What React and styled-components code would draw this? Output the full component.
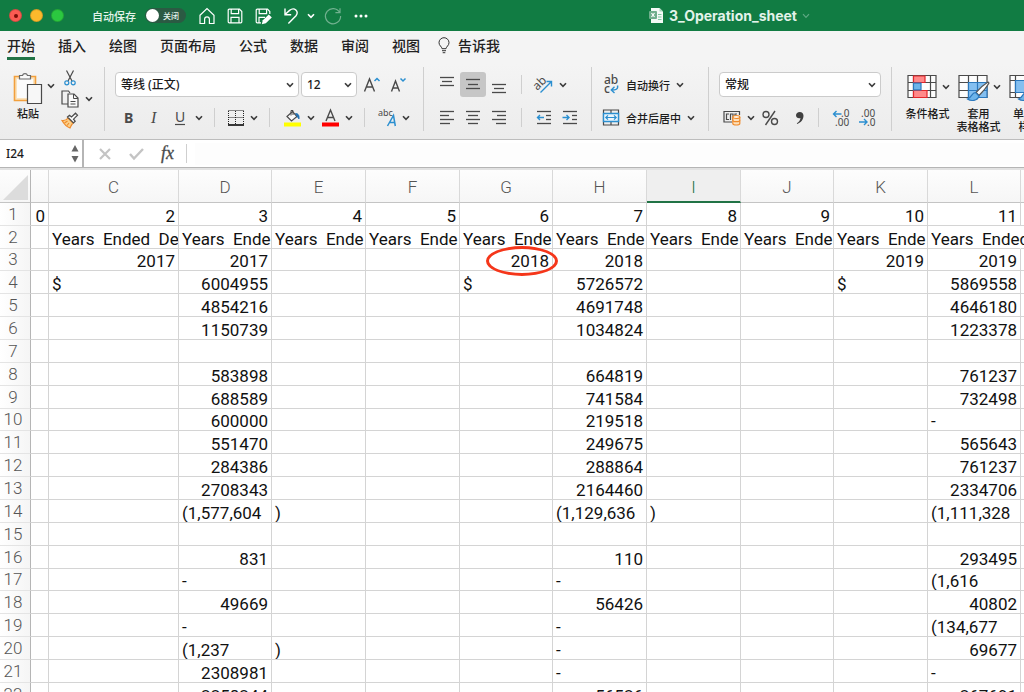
import { useState } from "react";
import styled, { createGlobalStyle } from "styled-components";

const GlobalStyle = createGlobalStyle`
  * {
    box-sizing: border-box;
  }
  body {
    margin: 0;
    overflow: hidden;
    background: #ffffff;
    font-family: "Noto Sans CJK SC", sans-serif;
    color: #1c1c1c;
  }
  button, input, select {
    font: inherit;
    color: inherit;
    margin: 0;
  }
  svg {
    flex: none;
    overflow: visible;
  }
`;

const Window = styled.div`
  display: flex;
  flex-direction: column;
  height: 100vh;
  overflow: hidden;
`;

const TitleBar = styled.header`
  display: flex;
  align-items: center;
  flex: none;
  height: 31px;
  padding-left: 9px;
  background: #117c43;
  color: #e3f3ea;
`;

const Lights = styled.div`
  display: flex;
  gap: 8px;
  margin-right: 28px;
`;

const Light = styled.button`
  display: grid;
  place-items: center;
  width: 13px;
  height: 13px;
  padding: 0;
  border: 1px solid rgba(0, 0, 0, 0.16);
  border-radius: 50%;
  background: ${({ $color }) => $color};
  &::after {
    content: "";
    width: 4px;
    height: 4px;
    border-radius: 50%;
    background: ${({ $edited }) => ($edited ? "#7a0d08" : "transparent")};
  }
`;

const AutoSave = styled.label`
  display: flex;
  align-items: center;
  gap: 9px;
  margin-right: 7px;
  font-size: 11px;
  font-weight: 500;
  line-height: 16px;
`;

const SwitchTrack = styled.span`
  display: flex;
  align-items: center;
  width: 41px;
  height: 15px;
  padding: 0 1px;
  border-radius: 8px;
  background: #2b5a43;
  font-size: 8px;
  gap: 4px;
`;

const SwitchInput = styled.input`
  appearance: none;
  width: 13px;
  height: 13px;
  border-radius: 50%;
  background: #ffffff;
`;

const QuickButton = styled.button`
  display: grid;
  place-items: center;
  width: ${({ $w }) => $w || 28}px;
  height: 24px;
  padding: 0;
  border: 0;
  background: none;
  color: #ffffff;
  opacity: ${({ $dim }) => ($dim ? 0.4 : 1)};
`;

const DocTitle = styled.h1`
  display: flex;
  align-items: center;
  gap: 5px;
  margin: 0 214px 0 auto;
  font-family: Inter, sans-serif;
  font-size: 14px;
  font-weight: 700;
  line-height: 16px;
`;

const Tabs = styled.nav`
  display: flex;
  flex: none;
  align-items: flex-start;
  gap: 18px;
  height: 33px;
  padding: 2px 7px 0;
  background: #f4f4f4;
`;

const TabList = styled.div`
  display: flex;
  gap: 23px;
`;

const Tab = styled.a`
  display: flex;
  align-items: center;
  gap: 8px;
  height: 27px;
  border-bottom: 3px solid ${({ $active }) => ($active ? "#217346" : "transparent")};
  color: #222222;
  font-size: 14px;
  font-weight: 500;
  line-height: 22px;
  text-decoration: none;
  white-space: nowrap;
`;

const Ribbon = styled.div`
  display: flex;
  flex: none;
  padding: 3px 0 8px;
  border-bottom: 1px solid #bdbdbd;
  background: linear-gradient(#f4f4f4, #ececec);
`;

const Group = styled.section`
  display: flex;
  flex: none;
  flex-direction: ${({ $row }) => ($row ? "row" : "column")};
  gap: ${({ $row }) => ($row ? 0 : 8)}px;
  width: ${({ $w }) => $w}px;
  height: 64px;
  padding: ${({ $row }) => ($row ? 0 : 5)}px 0 0 10px;
  border-left: 1px solid ${({ $first }) => ($first ? "transparent" : "#cfcfcf")};
`;

const Line = styled.div`
  display: flex;
  align-items: center;
  height: ${({ $h }) => $h || 25}px;
`;

const Tool = styled.button`
  display: grid;
  flex: none;
  place-items: center;
  width: ${({ $w }) => $w || 26}px;
  height: ${({ $h }) => $h || 25}px;
  padding: 0;
  border: 0;
  border-radius: 3px;
  background: ${({ $active }) => ($active ? "#c6c6c6" : "none")};
`;

const CaretButton = styled(Tool)`
  width: 12px;
`;

const Separator = styled.span`
  width: 1px;
  height: 19px;
  margin: ${({ $tight }) => ($tight ? "0 8px 0 0" : "0 9px")};
  background: #cfcfcf;
`;

const SelectBox = styled.span`
  display: grid;
  align-items: center;
  width: ${({ $w }) => $w}px;
  height: 25px;
  margin-right: 2px;
  border: 1px solid #cbcbcb;
  border-radius: 4px;
  background: #ffffff;
  & > * {
    grid-area: 1 / 1;
  }
  & > svg {
    justify-self: end;
    margin-right: 4px;
    pointer-events: none;
  }
`;

const Select = styled.select`
  appearance: none;
  width: 100%;
  height: 22px;
  padding: 0 5px;
  border: 0;
  background: none;
  font-family: "Noto Sans", "Noto Sans CJK SC", sans-serif;
  font-size: 12px;
  font-weight: 500;
  line-height: 18px;
`;

const TextTool = styled.button`
  display: flex;
  align-items: center;
  gap: 6px;
  height: 25px;
  padding: 0;
  border: 0;
  background: none;
  font-size: 11px;
  font-weight: 500;
  line-height: 16px;
  white-space: nowrap;
`;

const ToolStack = styled.div`
  display: flex;
  flex-direction: column;
`;

const Paste = styled.button`
  display: flex;
  flex-direction: column;
  align-items: center;
  width: 34px;
  height: 60px;
  padding: 5px 0 0;
  border: 0;
  background: none;
  font-size: 11px;
  font-weight: 500;
  line-height: 16px;
`;

const StyleTool = styled.button`
  display: flex;
  flex: none;
  flex-direction: column;
  align-items: center;
  width: 51px;
  padding: 5px 0 0;
  border: 0;
  background: none;
  font-size: 11px;
  font-weight: 500;
  line-height: 13px;
  white-space: pre;
`;

const StyleIcon = styled.span`
  display: flex;
  align-self: flex-end;
  align-items: center;
  gap: 5px;
  height: 35px;
  padding: 0 3px 5px 0;
`;

const FormulaBar = styled.div`
  display: flex;
  flex: none;
  align-items: center;
  height: 28px;
  border-bottom: 1px solid #b5b5b5;
  background: #ffffff;
`;

const NameBox = styled.div`
  display: flex;
  align-items: center;
  width: 84px;
  height: 27px;
  padding: 0 3px 0 6px;
  border-right: 2px solid #b5b5b5;
`;

const NameInput = styled.input`
  flex: 1;
  min-width: 0;
  padding: 0;
  border: 0;
  outline: 0;
  background: none;
  font-family: "Noto Sans", "Noto Sans CJK SC", sans-serif;
  font-size: 12px;
  font-weight: 500;
  line-height: 18px;
`;

const Stepper = styled.div`
  display: flex;
  flex-direction: column;
  gap: 3px;
`;

const FormulaInput = styled.input`
  flex: 1;
  min-width: 0;
  height: 22px;
  border: 0;
  outline: 0;
  background: #fdfdfd;
`;

const SheetArea = styled.main`
  flex: 1;
  min-height: 0;
  padding-top: 2px;
  overflow: hidden;
  background: #e2e2e2;
`;

const Sheet = styled.table`
  width: 1114px;
  table-layout: fixed;
  border-collapse: separate;
  border-spacing: 0;
  background: #ffffff;
  font-family: Roboto, "Noto Sans CJK SC", sans-serif;
  font-size: 17px;
`;

const Col = styled.col`
  width: ${({ $w }) => $w}px;
`;

const ColumnHead = styled.th`
  height: 33px;
  padding: 2px 0 0;
  border-right: 1px solid #d9d9d9;
  border-bottom: ${({ $active }) => ($active ? "2px solid #217346" : "1px solid #c4c4c4")};
  background: ${({ $active }) => ($active ? "#efefef" : "linear-gradient(#fdfdfd, #f6f6f6)")};
  color: ${({ $active }) => ($active ? "#217346" : "#555555")};
  font-weight: 300;
  line-height: 24px;
`;

const Corner = styled(ColumnHead)`
  border-right-color: #b5b5b5;
  & > svg {
    display: block;
    margin-left: 3px;
  }
`;

const Row = styled.tr`
  height: 23px;
  &:nth-child(7n + 3) {
    height: 22px;
  }
`;

const RowHead = styled.th`
  padding: 0 4px 0 0;
  border-right: 1px solid #b5b5b5;
  border-bottom: 1px solid #e4e4e4;
  background: linear-gradient(90deg, #ffffff, #f5f5f5);
  color: #555555;
  font-weight: 300;
  line-height: 21px;
`;

const Cell = styled.td`
  position: relative;
  padding: 3px 3px 0;
  border-right: 1px solid ${({ $spill }) => ($spill ? "transparent" : "#d4d4d4")};
  border-bottom: 1px solid #d4d4d4;
  color: #111111;
  line-height: 18px;
  text-align: ${({ $align }) => $align};
  white-space: pre;
  overflow: ${({ $open }) => ($open ? "visible" : "hidden")};
`;

/* hand-drawn ring laid over a cell */
const Ring = styled.span`
  position: absolute;
  top: -3px;
  right: -6px;
  width: 72px;
  height: 30px;
  border: 3px solid #f5361a;
  border-radius: 50%;
`;

const ink = "#4a4a4a";
const blue = "#2b8fd0";

const Svg = ({ w, h, children, ...rest }) => (
  <svg width={w} height={h} viewBox={`0 0 ${w} ${h}`} fill="none" stroke={ink} strokeWidth="1.2" aria-hidden="true" {...rest}>
    {children}
  </svg>
);

const Caret = (props) => (
  <Svg w={8} h={6} strokeWidth="1.6" stroke="#3c3c3c" {...props}>
    <path d="M1 1.2 4 4.4 7 1.2" />
  </Svg>
);

const Drop = ({ label, $h }) => (
  <CaretButton aria-label={label} $h={$h}>
    <Caret />
  </CaretButton>
);

const HomeIcon = () => (
  <Svg w={18} h={18} stroke="currentColor">
    <path d="M2 8.2 9 1.5l7 6.7v8.3h-4.6v-4.2a2.4 2.4 0 0 0-4.8 0v4.2H2z" />
  </Svg>
);

const SaveIcon = () => (
  <Svg w={16} h={16} stroke="currentColor">
    <path d="M1.2 2.2a1 1 0 0 1 1-1h10.3l2.3 2.3v10.3a1 1 0 0 1-1 1H2.2a1 1 0 0 1-1-1zM4.2 1.4v4.3h7.4V1.4M4 14.8V9.4h8v5.4" />
  </Svg>
);

const SaveAsIcon = () => (
  <Svg w={17} h={16} stroke="currentColor">
    <path d="M6 14.8H2.2a1 1 0 0 1-1-1V2.2a1 1 0 0 1 1-1h10.3l2.3 2.3V6M4.2 1.4v4.3h7.4V1.4M4 14.8V9.4h6" />
    <path d="M6.8 16.2l1-4 6-5.800 3 3-6 5.800z" fill="currentColor" stroke="none" />
  </Svg>
);

const UndoIcon = () => (
  <Svg w={16} h={18} stroke="currentColor" strokeWidth="1.4">
    <path d="M2 1.5v6.2h6.2M2.3 7.3 6.6 3.4c5-4 9.5 1.4 6.4 5.4L5.4 16.5" />
  </Svg>
);

const RedoIcon = () => (
  <Svg w={18} h={18} stroke="currentColor">
    <path d="M15.6 5.4A7.6 7.6 0 1 0 16.6 9M11.4 5.6h4.6V1.2" />
  </Svg>
);

const DotsIcon = () => (
  <Svg w={14} h={4} stroke="none">
    <g fill="currentColor">
      <circle cx="2" cy="2" r="1.5" />
      <circle cx="7" cy="2" r="1.5" />
      <circle cx="12" cy="2" r="1.5" />
    </g>
  </Svg>
);

const DocIcon = () => (
  <Svg w={15} h={16} stroke="none">
    <path d="M2 0h8.5L14 3.5V15H2z" fill="#f3faf6" />
    <path d="M10.5 0v3.5H14z" fill="#a6d5bb" />
    <path d="M9 6.5h3.5M9 9h3.5M9 11.5h3.5" stroke="#7cc6a0" />
    <rect y="3" width="8" height="8" rx="1" fill="#6fae8c" />
    <path d="M2.5 5l3 4M5.5 5l-3 4" stroke="#ffffff" />
  </Svg>
);

const BulbIcon = () => (
  <Svg w={12} h={17} stroke="#333333" strokeWidth="1">
    <path d="M4 11.7C3.8 9.5 1 8.700 1 5.700a5 5 0 0 1 10 0c0 3-2.800 3.800-3 6zM4 13.700h4M4.700 15.700h2.600" />
  </Svg>
);

const PasteIcon = () => (
  <Svg w={30} h={33}>
    <path d="M1.500 4.500h21v24h-21z" fill="#fbe3bd" stroke="#f2a03d" strokeWidth="1.600" />
    <path d="M4 7h16v19H4z" fill="#fbfbfb" stroke="none" />
    <path d="M6.500 7V3.500h3a2.600 2.600 0 0 1 5 0h3V7z" fill="#fafafa" stroke="#6a6a6a" />
    <path d="M14.500 12.500h14v19h-14z" fill="#f7f7f7" />
  </Svg>
);

const ScissorsIcon = () => (
  <Svg w={12} h={16}>
    <path d="M2.500.500 8 11M9.500.500 4 11" />
    <circle cx="2.800" cy="12.800" r="2" stroke={blue} />
    <circle cx="9.200" cy="12.800" r="2" stroke={blue} />
  </Svg>
);

const CopyIcon = () => (
  <Svg w={18} h={18}>
    <path d="M7 14H1V1h6.500l1.500 2" />
    <path d="M7 4h6l4 4v9H7z" fill="#fafafa" />
    <path d="M12.500 4v4.500H17M9.500 11.500h5M9.500 14h5" strokeWidth="1" />
  </Svg>
);

const BrushIcon = () => (
  <Svg w={18} h={17}>
    <path d="M1 8.500c3 .5 4.500-.5 6-2.500l5 5c-1.500 1.500-2 3-3 5C5 14.500 3 12 1 8.500z" fill="#fbd08a" stroke="#ef8b2c" />
    <path d="M3.500 11 6.500 9M6 13.500l2-2.500" stroke="#ef8b2c" />
    <path d="m6.500 5 2-1.800 2 1.800 4-3.800 2 2-4 4 1.700 2-1.700 1.800z" fill="#fafafa" />
  </Svg>
);

const Letter = ({ children, size = 14, x = 1, y = 13, ...rest }) => (
  <text x={x} y={y} fontSize={size} stroke="none" fill={ink} fontFamily="Noto Sans, sans-serif" {...rest}>
    {children}
  </text>
);

const GrowIcon = () => (
  <Svg w={18} h={18}>
    <path d="M1.500 15.500 6.500 3l5 12.500M3.300 11h6.400" strokeWidth="1.400" />
    <path d="m11.500 5 2.500-2.500L16.500 5" stroke={blue} strokeWidth="1.500" />
  </Svg>
);

const ShrinkIcon = () => (
  <Svg w={18} h={18}>
    <path d="M2.500 15.500 6.500 5l4 10.500M4 12h5" strokeWidth="1.400" />
    <path d="M11.500 2.500 14 5l2.500-2.500" stroke={blue} strokeWidth="1.500" />
  </Svg>
);

const BorderIcon = () => (
  <Svg w={16} h={16}>
    <path d="M.500.500h15M.500 7.500h15M.500 1v13M7.500 1v13M15.500 1v13" strokeDasharray="1 1" strokeWidth="1" stroke="#222222" />
    <path d="M0 15h16" strokeWidth="1.800" stroke="#222222" />
  </Svg>
);

const FillIcon = () => (
  <Svg w={17} h={18}>
    <path d="M3 7.500 8.500 2.500l4.500 5L7.500 12z" fill="#fafafa" />
    <path d="M7 6.500V1.500h2v4.500" strokeWidth="1" />
    <path d="M11.500 4.500c3 0 4 2 3.500 5.500l-1.500-2z" fill="#1f6fb0" stroke="#1f6fb0" strokeWidth="0.800" />
    <path d="M0 15.500h17" stroke="#ffff00" strokeWidth="4" />
  </Svg>
);

const FontColorIcon = () => (
  <Svg w={17} h={18}>
    <path d="M4 12 8.500 1 13 12M5.500 8.500h6" strokeWidth="1.400" />
    <path d="M0 15.500h17" stroke="#ff0000" strokeWidth="4" />
  </Svg>
);

const PhoneticIcon = () => (
  <Svg w={20} h={18}>
    <Letter size={9} x={1} y={7}>abc</Letter>
    <path d="M10.500 17 16.500 6.500 18.300 17M13 13.500h4.800" stroke={blue} strokeWidth="1.500" />
  </Svg>
);

/* each entry is [x1, x2, y] */
const Bars = ({ lines, children }) => (
  <Svg w={16} h={16}>
    {lines.map(([a, b, y]) => (
      <path key={y} d={`M${a} ${y}H${b}`} strokeWidth="1.300" />
    ))}
    {children}
  </Svg>
);

const topBars = [[1, 15, 0.5], [3, 13, 4.5], [1, 15, 8.5]];
const middleBars = [[1, 15, 2.5], [3, 13, 7.5], [1, 15, 11.5]];
const bottomBars = [[1, 15, 7.5], [3, 13, 11.5], [1, 15, 15.5]];
const leftBars = [[1, 15, 1.5], [1, 10, 5.5], [1, 15, 9.5], [1, 11, 13.5]];
const centerBars = [[1, 15, 1.5], [3, 13, 5.5], [1, 15, 9.5], [3, 13, 13.5]];
const rightBars = [[1, 15, 1.5], [6, 15, 5.5], [1, 15, 9.5], [5, 15, 13.5]];
const indentBars = [[1, 15, 1.5], [10, 15, 5.5], [10, 15, 9.5], [1, 15, 13.5]];

const OrientIcon = () => (
  <Svg w={20} h={18}>
    <Letter size={12} x={-1} y={11} transform="rotate(-45 6 8)">ab</Letter>
    <path d="M6.500 16.500 17 6M12.500 5.500H17.500v5" stroke={blue} strokeWidth="1.400" />
  </Svg>
);

const WrapIcon = () => (
  <Svg w={18} h={18}>
    <Letter size={12} x={2} y={8}>ab</Letter>
    <Letter size={12} x={2} y={17}>c</Letter>
    <path d="M15.500 9.500c1 4-2 4.500-6 4.500M12.500 10.800 9.300 14l3.200 3" stroke={blue} strokeWidth="1.400" />
  </Svg>
);

const MergeIcon = () => (
  <Svg w={18} h={17}>
    <path d="M1.500 1h15v15h-15zM9 1v4M9 12v4" />
    <path d="M1.500 4.500h15v8h-15z" fill="#eaf5fc" stroke={blue} strokeWidth="1.400" />
    <path d="M4 8.500h10M6 6.300 3.800 8.500 6 10.700M12 6.300l2.200 2.200-2.200 2.200" stroke={blue} />
  </Svg>
);

const CurrencyIcon = () => (
  <Svg w={18} h={16}>
    <path d="M9 12H1V1.500h15.500V5" />
    <path d="M6 4H3.500v5.500H6M7.500 10V4h2.500v6M12 6V4h2" />
    <path d="M9.800 7v6.500c0 2 7 2 7 0V7" fill="#fde0bb" stroke="#ef8b2c" />
    <ellipse cx="13.300" cy="7" rx="3.500" ry="1.500" fill="#fff2e0" stroke="#ef8b2c" />
    <path d="M9.800 10.200c0 2 7 2 7 0" stroke="#ef8b2c" />
  </Svg>
);

const PercentIcon = () => (
  <Svg w={16} h={16} strokeWidth="1.400">
    <circle cx="4" cy="4.500" r="3" />
    <circle cx="12.500" cy="11.500" r="3" />
    <path d="M13 1 3.500 15" />
  </Svg>
);

const CommaIcon = () => (
  <Svg w={16} h={16} stroke="none">
    <path d="M11.800 2C9.600 2 8 3.300 8 5.300c0 1.900 1.400 3 3.300 3 .5 0 .9 0 1.200-.3-.2 2.200-1.500 3.900-3.700 5.300l.5.700c3.800-1.700 6.200-4.600 6.200-8.300C15.500 3.400 14 2 11.800 2z" fill="#404040" />
  </Svg>
);

const MoreDecimals = () => (
  <Svg w={18} h={18}>
    <Letter size={10} x={9} y={8}>.0</Letter>
    <Letter size={10} x={3} y={17}>.00</Letter>
    <path d="M9.500 5h-8M4.500 2 1.500 5l3 3" stroke={blue} strokeWidth="1.400" />
  </Svg>
);

const LessDecimals = () => (
  <Svg w={18} h={18}>
    <Letter size={10} x={3} y={8}>.00</Letter>
    <Letter size={10} x={9} y={17}>.0</Letter>
    <path d="M1 13h8M6 10l3 3-3 3" stroke={blue} strokeWidth="1.400" />
  </Svg>
);

const ConditionalIcon = () => (
  <Svg w={30} h={30}>
    <path d="M1 3.500h28v22H1z" fill="#fdfdfd" />
    <path d="M1 10.500h28M1 18.500h28M6.500 3.500v22M23.500 3.500v22" />
    <path d="M6.500 4h11.500v6.500H6.500zM6.500 18.500h13.500v7H6.500z" fill="#ff8a8a" stroke="#e3262b" />
    <path d="M6.500 11.200h7.500v6.600H6.500z" fill="#6db4ea" stroke="#2b78bd" />
  </Svg>
);

const Brush = () => (
  <>
    <path d="M30 10c-4 2.500-9 7-12 10.500l3 3C24.500 20 29 14.500 31 11z" fill="#ffffff" stroke="#555555" />
    <path d="M17.500 20.500c-4 0-3.500 5-8 6.500 3.500 2.500 10 2 11.500-3z" fill="#6db4ea" stroke="#2b78bd" />
  </>
);

const TableFormatIcon = () => (
  <Svg w={30} h={30}>
    <path d="M1 3.500h28v22H1z" fill="#fdfdfd" />
    <path d="M1 10.500h28M1 18.500h28M10.500 3.500v22M19.500 3.500v22" />
    <path d="M10.500 10.500h18.500v15H10.500z" fill="#84bff0" stroke="#2b78bd" />
    <path d="M10.500 18.500H29M19.500 10.500v15" stroke="#2b78bd" />
    <Brush />
  </Svg>
);

const CellStyleIcon = () => (
  <Svg w={30} h={30}>
    <path d="M1 3.500h28v22H1z" fill="#fdfdfd" />
    <path d="M1 8.500h28M1 20.500h28M6.500 3.500v22M24 3.500v22" />
    <path d="M6.500 8.500H24v12H6.500z" fill="#84bff0" stroke="#2b78bd" />
    <Brush />
  </Svg>
);

const tabs = ["插入", "绘图", "页面布局", "公式", "数据", "审阅", "视图"];

const columns = [
  { id: "B", label: "", w: 18 },
  { id: "C", w: 130 },
  { id: "D", w: 93 },
  { id: "E", w: 94 },
  { id: "F", w: 94 },
  { id: "G", w: 93 },
  { id: "H", w: 94 },
  { id: "I", w: 94 },
  { id: "J", w: 93 },
  { id: "K", w: 94 },
  { id: "L", w: 93 },
  { id: "M", w: 93 },
];

const heading = "Years  Ende";

const rows = [
  { B: "0", C: "2", D: "3", E: "4", F: "5", G: "6", H: "7", I: "8", J: "9", K: "10", L: "11" },
  {
    C: "Years  Ended  De", D: heading, E: heading, F: heading, G: heading,
    H: heading, I: heading, J: heading, K: heading, L: "Years  Ended",
  },
  { C: "2017", D: "2017", G: "2018", H: "2018", K: "2019", L: "2019" },
  { C: "$", D: "6004955", G: "$", H: "5726572", K: "$", L: "5869558" },
  { D: "4854216", H: "4691748", L: "4646180" },
  { D: "1150739", H: "1034824", L: "1223378" },
  {},
  { D: "583898", H: "664819", L: "761237" },
  { D: "688589", H: "741584", L: "732498" },
  { D: "600000", H: "219518", L: "-" },
  { D: "551470", H: "249675", L: "565643" },
  { D: "284386", H: "288864", L: "761237" },
  { D: "2708343", H: "2164460", L: "2334706" },
  { D: "(1,577,604", E: ")", H: "(1,129,636", I: ")", L: "(1,111,328" },
  {},
  { D: "831", H: "110", L: "293495" },
  { D: "-", H: "-", L: "(1,616" },
  { D: "49669", H: "56426", L: "40802" },
  { D: "-", H: "-", L: "(134,677" },
  { D: "(1,237", E: ")", H: "-", L: "69677" },
  { D: "2308981", H: "-", L: "-" },
  { D: "2258244", H: "56526", L: "267691" },
];

const SheetCell = ({ id, row, value = "" }) => {
  const circled = id === "G" && row === 3;
  const spill = id === "L" && row === 2;
  return (
    <Cell $align={/^\d+$/.test(value) ? "right" : "left"} $open={circled || spill} $spill={spill}>
      {value}
      {circled && <Ring />}
    </Cell>
  );
};

const App = () => {
  const [autoSave, setAutoSave] = useState(false);
  const [name, setName] = useState("I24");

  return (
    <Window>
      <GlobalStyle />
      <TitleBar>
        <Lights>
          <Light $color="#fb5b52" $edited aria-label="关闭窗口" />
          <Light $color="#fdb92c" aria-label="最小化" />
          <Light $color="#2bc840" aria-label="缩放" />
        </Lights>
        <AutoSave>
          自动保存
          <SwitchTrack>
            <SwitchInput type="checkbox" checked={autoSave} onChange={() => setAutoSave(!autoSave)} />
            关闭
          </SwitchTrack>
        </AutoSave>
        <QuickButton aria-label="主页"><HomeIcon /></QuickButton>
        <QuickButton aria-label="保存"><SaveIcon /></QuickButton>
        <QuickButton aria-label="另存为"><SaveAsIcon /></QuickButton>
        <QuickButton aria-label="撤消"><UndoIcon /></QuickButton>
        <QuickButton $w={12} aria-label="撤消列表"><Caret stroke="#ffffff" /></QuickButton>
        <QuickButton $w={32} $dim aria-label="重做"><RedoIcon /></QuickButton>
        <QuickButton $w={24} aria-label="更多"><DotsIcon /></QuickButton>
        <DocTitle>
          <DocIcon />
          3_Operation_sheet
          <Caret stroke="#5fa883" strokeWidth="1.2" />
        </DocTitle>
      </TitleBar>

      <Tabs>
        <TabList>
          <Tab href="#home" $active>开始</Tab>
          {tabs.map((tab) => (
            <Tab key={tab} href={`#${tab}`}>{tab}</Tab>
          ))}
        </TabList>
        <Tab href="#tell-me"><BulbIcon />告诉我</Tab>
      </Tabs>

      <Ribbon>
        <Group $row $first $w={104}>
          <Paste>
            <PasteIcon />
            粘贴
          </Paste>
          <Drop label="粘贴选项" $h={38} />
          <ToolStack>
            <Line $h={22}><Tool $h={20} aria-label="剪切"><ScissorsIcon /></Tool></Line>
            <Line $h={22}>
              <Tool $h={20} aria-label="复制"><CopyIcon /></Tool>
              <Drop label="复制选项" $h={20} />
            </Line>
            <Line $h={22}><Tool $h={20} aria-label="格式刷"><BrushIcon /></Tool></Line>
          </ToolStack>
        </Group>

        <Group $w={319}>
          <Line>
            <SelectBox $w={184}>
              <Select aria-label="字体"><option>等线 (正文)</option></Select>
              <Caret />
            </SelectBox>
            <SelectBox $w={56}>
              <Select aria-label="字号"><option>12</option></Select>
              <Caret />
            </SelectBox>
            <Tool aria-label="增大字号"><GrowIcon /></Tool>
            <Tool aria-label="减小字号"><ShrinkIcon /></Tool>
          </Line>
          <Line>
            <Tool aria-label="加粗"><Svg w={16} h={16}><Letter x={4} fontWeight="700">B</Letter></Svg></Tool>
            <Tool aria-label="倾斜"><Svg w={16} h={16}><Letter x={5} fontStyle="italic" fontFamily="Liberation Serif, serif" size={16}>I</Letter></Svg></Tool>
            <Tool aria-label="下划线"><Svg w={16} h={16}><Letter x={3} y={12}>U</Letter><path d="M3 14.500h10" /></Svg></Tool>
            <Drop label="下划线样式" />
            <Separator />
            <Tool $w={24} aria-label="边框"><BorderIcon /></Tool>
            <Drop label="边框样式" />
            <Separator />
            <Tool aria-label="填充颜色"><FillIcon /></Tool>
            <Drop label="填充颜色列表" />
            <Tool aria-label="字体颜色"><FontColorIcon /></Tool>
            <Drop label="字体颜色列表" />
            <Separator />
            <Tool aria-label="拼音"><PhoneticIcon /></Tool>
            <Drop label="拼音选项" />
          </Line>
        </Group>

        <Group $w={168}>
          <Line>
            <Tool aria-label="顶端对齐"><Bars lines={topBars} /></Tool>
            <Tool $active aria-label="垂直居中"><Bars lines={middleBars} /></Tool>
            <Tool aria-label="底端对齐"><Bars lines={bottomBars} /></Tool>
            <Separator />
            <Tool aria-label="方向"><OrientIcon /></Tool>
            <Drop label="方向选项" />
          </Line>
          <Line>
            <Tool aria-label="左对齐"><Bars lines={leftBars} /></Tool>
            <Tool aria-label="居中"><Bars lines={centerBars} /></Tool>
            <Tool aria-label="右对齐"><Bars lines={rightBars} /></Tool>
            <Separator />
            <Tool aria-label="减少缩进">
              <Bars lines={indentBars}>
                <path d="M8 7.500H1.500M4 5 1.500 7.500 4 10" stroke={blue} strokeWidth="1.400" />
              </Bars>
            </Tool>
            <Tool aria-label="增加缩进">
              <Bars lines={indentBars}>
                <path d="M.500 7.500H7M4.500 5 7 7.500 4.500 10" stroke={blue} strokeWidth="1.400" />
              </Bars>
            </Tool>
          </Line>
        </Group>

        <Group $w={117}>
          <TextTool><WrapIcon />自动换行<Caret /></TextTool>
          <TextTool><MergeIcon />合并后居中<Caret /></TextTool>
        </Group>

        <Group $w={183}>
          <Line>
            <SelectBox $w={162}>
              <Select aria-label="数字格式"><option>常规</option></Select>
              <Caret />
            </SelectBox>
          </Line>
          <Line>
            <Tool aria-label="会计格式"><CurrencyIcon /></Tool>
            <Drop label="货币列表" />
            <Tool aria-label="百分比"><PercentIcon /></Tool>
            <Tool aria-label="千位分隔"><CommaIcon /></Tool>
            <Separator />
            <Tool aria-label="增加小数位"><MoreDecimals /></Tool>
            <Tool aria-label="减少小数位"><LessDecimals /></Tool>
          </Line>
        </Group>

        <Group $row $w={180}>
          <StyleTool><StyleIcon><ConditionalIcon /><Caret /></StyleIcon>条件格式</StyleTool>
          <StyleTool><StyleIcon><TableFormatIcon /><Caret /></StyleIcon>{"套用\n表格格式"}</StyleTool>
          <StyleTool><StyleIcon><CellStyleIcon /><Caret /></StyleIcon>{"单元格\n样式"}</StyleTool>
        </Group>
      </Ribbon>

      <FormulaBar>
        <NameBox>
          <NameInput aria-label="名称框" value={name} onChange={(e) => setName(e.target.value)} />
          <Stepper>
            <Tool $w={8} $h={8} aria-label="上一个"><Svg w={8} h={7} stroke="none"><path d="M4 0 7.500 6.500h-7z" fill="#666666" /></Svg></Tool>
            <Tool $w={8} $h={8} aria-label="下一个"><Svg w={8} h={7} stroke="none"><path d="M4 6.500 7.500 0h-7z" fill="#666666" /></Svg></Tool>
          </Stepper>
        </NameBox>
        <Tool $w={42} aria-label="取消"><Svg w={12} h={12} stroke="#c4c4c4" strokeWidth="2.200"><path d="m1 1 10 10M11 1 1 11" /></Svg></Tool>
        <Tool $w={20} aria-label="输入"><Svg w={15} h={12} stroke="#c4c4c4" strokeWidth="2.400"><path d="m1 6 4 4.500L14 1" /></Svg></Tool>
        <Tool $w={40} aria-label="插入函数"><Svg w={14} h={20}><Letter x={2} y={15} size={18} fontStyle="italic" fontFamily="Liberation Serif, serif" stroke={ink} strokeWidth="0.3">fx</Letter></Svg></Tool>
        <Separator $tight />
        <FormulaInput aria-label="编辑栏" />
      </FormulaBar>

      <SheetArea>
        <Sheet>
          <colgroup>
            <Col $w={31} />
            {columns.map((c) => <Col key={c.id} $w={c.w} />)}
          </colgroup>
          <thead>
            <tr>
              <Corner>
                <Svg w={25} h={25} stroke="none"><path d="M25 0v25H0z" fill="#dcdcdc" /></Svg>
              </Corner>
              {columns.map((c) => (
                <ColumnHead key={c.id} scope="col" $active={c.id === "I"}>{c.label ?? c.id}</ColumnHead>
              ))}
            </tr>
          </thead>
          <tbody>
            {rows.map((row, i) => (
              <Row key={i}>
                <RowHead scope="row">{i + 1}</RowHead>
                {columns.map((c) => <SheetCell key={c.id} id={c.id} row={i + 1} value={row[c.id]} />)}
              </Row>
            ))}
          </tbody>
        </Sheet>
      </SheetArea>
    </Window>
  );
};

export default App;
